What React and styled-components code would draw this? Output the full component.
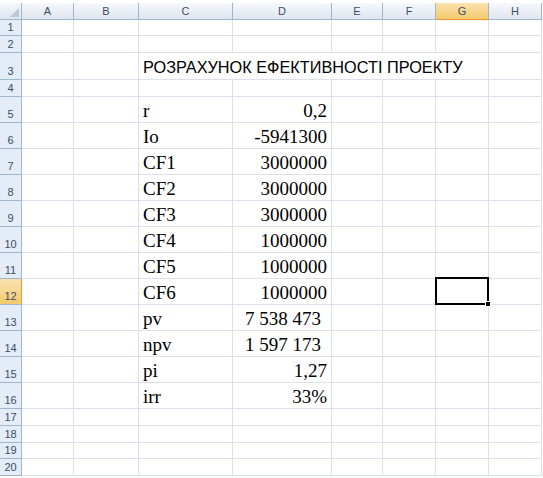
import React from "react";
import styled, { createGlobalStyle, css } from "styled-components";

const GlobalStyle = createGlobalStyle`
  html, body {
    margin: 0;
    padding: 0;
    background: #ffffff;
  }
`;

const COLS = [
  { key: "A", w: 52 },
  { key: "B", w: 65 },
  { key: "C", w: 94 },
  { key: "D", w: 99 },
  { key: "E", w: 51 },
  { key: "F", w: 53 },
  { key: "G", w: 53 },
  { key: "H", w: 53 },
];

const ROWS = [
  { n: 1, h: 16 },
  { n: 2, h: 17 },
  { n: 3, h: 27, title: "РОЗРАХУНОК ЕФЕКТИВНОСТІ ПРОЕКТУ" },
  { n: 4, h: 17 },
  { n: 5, h: 26, label: "r", value: "0,2" },
  { n: 6, h: 26, label: "Io", value: "-5941300" },
  { n: 7, h: 26, label: "CF1", value: "3000000" },
  { n: 8, h: 26, label: "CF2", value: "3000000" },
  { n: 9, h: 26, label: "CF3", value: "3000000" },
  { n: 10, h: 26, label: "CF4", value: "1000000" },
  { n: 11, h: 26, label: "CF5", value: "1000000" },
  { n: 12, h: 26, label: "CF6", value: "1000000" },
  { n: 13, h: 26, label: "pv", value: "7 538 473", accounting: true },
  { n: 14, h: 26, label: "npv", value: "1 597 173", accounting: true },
  { n: 15, h: 26, label: "pi", value: "1,27" },
  { n: 16, h: 26, label: "irr", value: "33%" },
  { n: 17, h: 17 },
  { n: 18, h: 17 },
  { n: 19, h: 16 },
  { n: 20, h: 17 },
];

const ACTIVE_COL = "G";
const ACTIVE_ROW = 12;

const Sheet = styled.div`
  width: 543px;
  padding-top: 3px;
  background: #ffffff;
`;

const Grid = styled.div`
  display: grid;
  grid-template-columns: 22px ${COLS.map((c) => c.w + "px").join(" ")};
  grid-template-rows: 17px ${ROWS.map((r) => r.h + "px").join(" ")};
`;

const headerBase = css`
  box-sizing: border-box;
  display: flex;
  align-items: center;
  justify-content: center;
  font-family: "Liberation Sans", Arial, sans-serif;
  font-size: 11px;
  color: #3c4d68;
  border-right: 1px solid #9eb6ce;
  border-bottom: 1px solid #9eb6ce;
`;

const Corner = styled.div`
  ${headerBase};
  position: relative;
  background: linear-gradient(#f4f7fb, #dde5f0);

  &::after {
    content: "";
    position: absolute;
    right: 2px;
    bottom: 2px;
    border-style: solid;
    border-width: 0 0 9px 9px;
    border-color: transparent transparent #b9c8da transparent;
  }
`;

const ColHeader = styled.div`
  ${headerBase};
  background: ${(p) =>
    p.$active
      ? "linear-gradient(#fbe3b0, #f4c96a)"
      : "linear-gradient(#f6f8fb, #dfe6f0)"};
  border-bottom-color: ${(p) => (p.$active ? "#f29536" : "#9eb6ce")};
`;

const RowHeader = styled.div`
  ${headerBase};
  align-items: flex-end;
  padding-bottom: 2px;
  background: ${(p) =>
    p.$active ? "linear-gradient(#fbe3b0, #f4c96a)" : "#e4ecf7"};
  border-right-color: ${(p) => (p.$active ? "#f29536" : "#9eb6ce")};
`;

const Cell = styled.div`
  box-sizing: border-box;
  position: relative;
  display: flex;
  align-items: flex-end;
  justify-content: ${(p) => (p.$right ? "flex-end" : "flex-start")};
  grid-column: span ${(p) => p.$span || 1};
  border-right: 1px solid #dae1ec;
  border-bottom: 1px solid #dae1ec;
  white-space: nowrap;
  overflow: visible;

  ${(p) =>
    p.$selected &&
    css`
      &::before {
        content: "";
        position: absolute;
        top: -2px;
        left: -1px;
        right: -1px;
        bottom: -1px;
        border: 2px solid #000000;
        z-index: 2;
      }
      &::after {
        content: "";
        position: absolute;
        right: -3px;
        bottom: -3px;
        width: 4px;
        height: 4px;
        background: #000000;
        border: 1px solid #ffffff;
        z-index: 3;
      }
    `}
`;

const Title = styled.span`
  font-family: "Liberation Sans", Arial, sans-serif;
  font-size: 16.3px;
  line-height: 16px;
  color: #000000;
  padding: 0 0 4px 4px;
`;

const Label = styled.span`
  font-family: "Liberation Serif", "Times New Roman", serif;
  font-size: 19px;
  line-height: 19px;
  color: #000000;
  padding: 0 0 2px 4px;
`;

const Value = styled.span`
  font-family: "Liberation Serif", "Times New Roman", serif;
  font-size: 19px;
  line-height: 19px;
  color: #000000;
  padding: 0 ${(p) => (p.$accounting ? "10px" : "4px")} 2px 0;
`;

function SheetRow({ row }) {
  const cells = [];
  let i = 0;
  while (i < COLS.length) {
    const col = COLS[i];
    const selected = col.key === ACTIVE_COL && row.n === ACTIVE_ROW;
    if (col.key === "C" && row.title) {
      cells.push(
        <Cell key={col.key} $span={5}>
          <Title>{row.title}</Title>
        </Cell>
      );
      i += 5;
      continue;
    }
    let content = null;
    if (col.key === "C" && row.label) content = <Label>{row.label}</Label>;
    if (col.key === "D" && row.value)
      content = <Value $accounting={row.accounting}>{row.value}</Value>;
    cells.push(
      <Cell key={col.key} $right={col.key === "D"} $selected={selected}>
        {content}
      </Cell>
    );
    i += 1;
  }

  return (
    <>
      <RowHeader $active={row.n === ACTIVE_ROW}>{row.n}</RowHeader>
      {cells}
    </>
  );
}

export default function App() {
  return (
    <>
      <GlobalStyle />
      <Sheet>
        <Grid>
          <Corner />
          {COLS.map((c) => (
            <ColHeader key={c.key} $active={c.key === ACTIVE_COL}>
              {c.key}
            </ColHeader>
          ))}
          {ROWS.map((r) => (
            <SheetRow key={r.n} row={r} />
          ))}
        </Grid>
      </Sheet>
    </>
  );
}
